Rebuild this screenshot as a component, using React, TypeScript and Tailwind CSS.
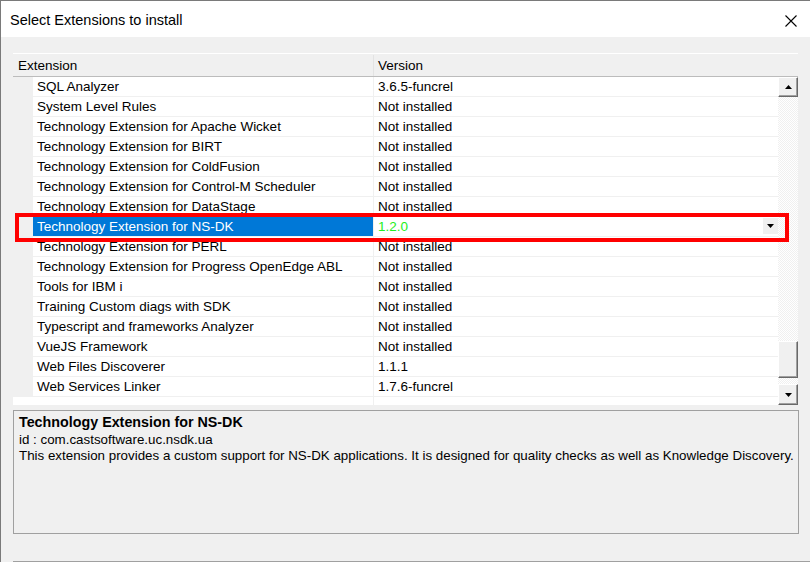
import React from "react";

type Extension = {
    name: string;
    version: string;
    selected?: boolean;
}

const extensions: Extension[] = [
    { name: "SQL Analyzer", version: "3.6.5-funcrel" },
    { name: "System Level Rules", version: "Not installed" },
    { name: "Technology Extension for Apache Wicket", version: "Not installed" },
    { name: "Technology Extension for BIRT", version: "Not installed" },
    { name: "Technology Extension for ColdFusion", version: "Not installed" },
    { name: "Technology Extension for Control-M Scheduler", version: "Not installed" },
    { name: "Technology Extension for DataStage", version: "Not installed" },
    { name: "Technology Extension for NS-DK", version: "1.2.0", selected: true },
    { name: "Technology Extension for PERL", version: "Not installed" },
    { name: "Technology Extension for Progress OpenEdge ABL", version: "Not installed" },
    { name: "Tools for IBM i", version: "Not installed" },
    { name: "Training Custom diags with SDK", version: "Not installed" },
    { name: "Typescript and frameworks Analyzer", version: "Not installed" },
    { name: "VueJS Framework", version: "Not installed" },
    { name: "Web Files Discoverer", version: "1.1.1" },
    { name: "Web Services Linker", version: "1.7.6-funcrel" },
];

const Arrow = ({ up }: { up?: boolean }) => (
    <svg width="7" height="4" viewBox="0 0 7 4">
        <polygon points={up ? "0,4 7,4 3.5,0" : "0,0 7,0 3.5,4"} fill="#000" />
    </svg>
)

const ScrollButton = ({ up, className }: { up?: boolean; className: string }) => (
    <div className={`${className} flex items-center justify-center bg-[#f0f0f0] border border-t-white border-l-white border-r-[#696969] border-b-[#696969] shadow-[inset_-1px_-1px_0_#a0a0a0]`}>
        <Arrow up={up} />
    </div>
)

const Row = ({ ext }: { ext: Extension }) => {
    return (
        <div className="flex h-[20px]">
            <div className="w-[20px] bg-[#f0f0f0]" />
            <div className={`w-[341px] border-r border-b border-r-[#f0f0f0] border-b-[#f0f0f0] pl-[4px] leading-[19px] whitespace-nowrap ${ext.selected ? "bg-[#0078d7] text-white" : "bg-white"}`}>
                {ext.name}
            </div>
            <div className="flex-1 flex items-start justify-between bg-white border-b border-[#f0f0f0] pl-[4px] leading-[19px]">
                <span className={ext.selected ? "text-[#22ee22]" : ""}>{ext.version}</span>
                {ext.selected && (
                    <div className="mt-[1px] w-[15px] h-[16px] bg-[#f0f0f0] flex items-center justify-center">
                        <Arrow />
                    </div>
                )}
            </div>
        </div>
    )
}

const App = () => {
    return (
        <div className="relative w-[810px] h-[562px] overflow-hidden bg-[#f0f0f0] border-l border-t border-[#7a7a7a] text-[13.5px] text-black font-['Liberation_Sans',Arial,sans-serif]">
            <div className="h-[36px] bg-white flex items-center justify-between pl-[9px] pr-[13px] pt-[3px]">
                <span className="text-[14.5px]">Select Extensions to install</span>
                <svg width="12" height="12" viewBox="0 0 12 12">
                    <path d="M0.5 0.5 L11.5 11.5 M11.5 0.5 L0.5 11.5" stroke="#000" strokeWidth="1.1" />
                </svg>
            </div>

            <div className="ml-[12px] mt-[16px] w-[785px] border-t border-white">
                <div className="flex h-[23px] border-b border-[#bcbcbc] leading-[22px] pt-[1px]">
                    <div className="w-[361px] pl-[5px] border-r border-[#e3e3e3]">Extension</div>
                    <div className="flex-1 pl-[4px]">Version</div>
                </div>
                <div className="flex h-[328px]">
                    <div className="flex-1 flex flex-col">
                        {extensions.map((ext) => (
                            <Row key={ext.name} ext={ext} />
                        ))}
                        <div className="flex-1 flex bg-white">
                            <div className="w-[361px] border-r border-[#f0f0f0]" />
                        </div>
                    </div>
                    <div className="w-[20px] flex flex-col">
                        <ScrollButton up className="h-[20px]" />
                        <div className="h-[244px] bg-[repeating-conic-gradient(#f0f0f0_0_25%,#ffffff_0_50%)] bg-[length:2px_2px]" />
                        <div className="h-[37px] bg-[#f0f0f0] border border-t-white border-l-white border-r-[#696969] border-b-[#696969] shadow-[inset_-1px_-1px_0_#a0a0a0]" />
                        <div className="h-[6px] bg-[repeating-conic-gradient(#f0f0f0_0_25%,#ffffff_0_50%)] bg-[length:2px_2px]" />
                        <ScrollButton className="h-[21px]" />
                    </div>
                </div>
            </div>

            <div className="ml-[12px] mt-[5px] w-[786px] h-[124px] border border-[#a0a0a0] pl-[5px] pt-[2px] text-[13.35px]">
                <div className="font-bold leading-[19px] text-[14.3px]">Technology Extension for NS-DK</div>
                <div className="leading-[16px]">id : com.castsoftware.uc.nsdk.ua</div>
                <div className="leading-[16px] whitespace-nowrap">This extension provides a custom support for NS-DK applications. It is designed for quality checks as well as Knowledge Discovery.</div>
            </div>

            <div className="ml-[12px] mt-[27px] border-t border-[#a0a0a0]" />

            {/* red highlight drawn over the selected row */}
            <div className="absolute left-[14px] top-[212px] w-[774px] h-[29px] border-[4px] border-[#ff0000]" />
        </div>
    )
}

export default App;
